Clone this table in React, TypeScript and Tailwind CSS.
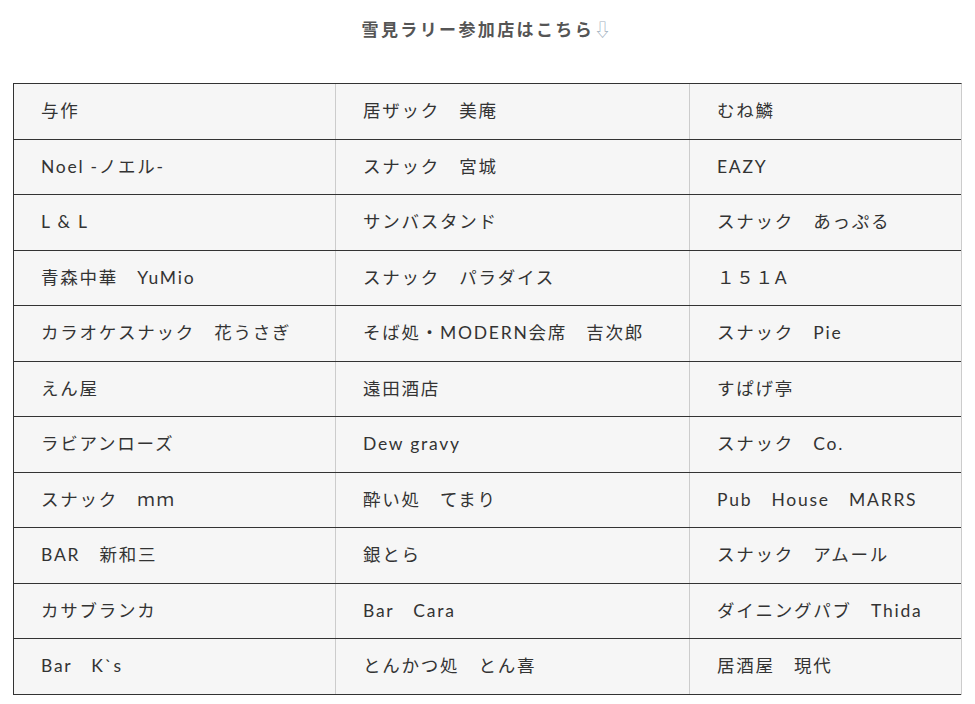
import React from "react";

const rows: [string, string, string][] = [
  ["与作", "居ザック　美庵", "むね鱗"],
  ["Noel -ノエル-", "スナック　宮城", "EAZY"],
  ["L & L", "サンバスタンド", "スナック　あっぷる"],
  ["青森中華　YuMio", "スナック　パラダイス", "１５１A"],
  ["カラオケスナック　花うさぎ", "そば処・MODERN会席　吉次郎", "スナック　Pie"],
  ["えん屋", "遠田酒店", "すぱげ亭"],
  ["ラビアンローズ", "Dew gravy", "スナック　Co."],
  ["スナック　ｍｍ", "酔い処　てまり", "Pub　House　MARRS"],
  ["BAR　新和三", "銀とら", "スナック　アムール"],
  ["カサブランカ", "Bar　Cara", "ダイニングパブ　Thida"],
  ["Bar　K`s", "とんかつ処　とん喜", "居酒屋　現代"],
];

export default function App() {
  return (
    <div
      className="bg-white w-[975px] h-[704px] overflow-hidden text-[#333]"
      style={{ fontFamily: 'Lato, "Noto Sans CJK JP", sans-serif' }}
    >
      <div className="h-[58px] pt-[17px] text-center text-[17px] font-bold tracking-[0.14em] text-[#555]">
        雪見ラリー参加店はこちら<span className="text-[#9fb0c0] font-normal">⇩</span>
      </div>
      <div className="ml-[13px] w-[949px] mt-[25px] border-t border-l border-t-[#333] border-l-[#333] border-r border-r-[#ccc] bg-[#f6f6f6]">
        {rows.map((r, i) => (
          <div key={i} className="flex h-[55.5px] border-b border-[#333]">
            <div className="w-[322px] shrink-0 border-r border-[#ccc] pl-[27px] flex items-center text-[17.5px] tracking-[0.1em]">
              {r[0]}
            </div>
            <div className="w-[354px] shrink-0 border-r border-[#ccc] pl-[27px] flex items-center text-[17.5px] tracking-[0.1em]">
              {r[1]}
            </div>
            <div className="flex-1 pl-[27px] flex items-center text-[17.5px] tracking-[0.1em]">
              {r[2]}
            </div>
          </div>
        ))}
      </div>
    </div>
  );
}
